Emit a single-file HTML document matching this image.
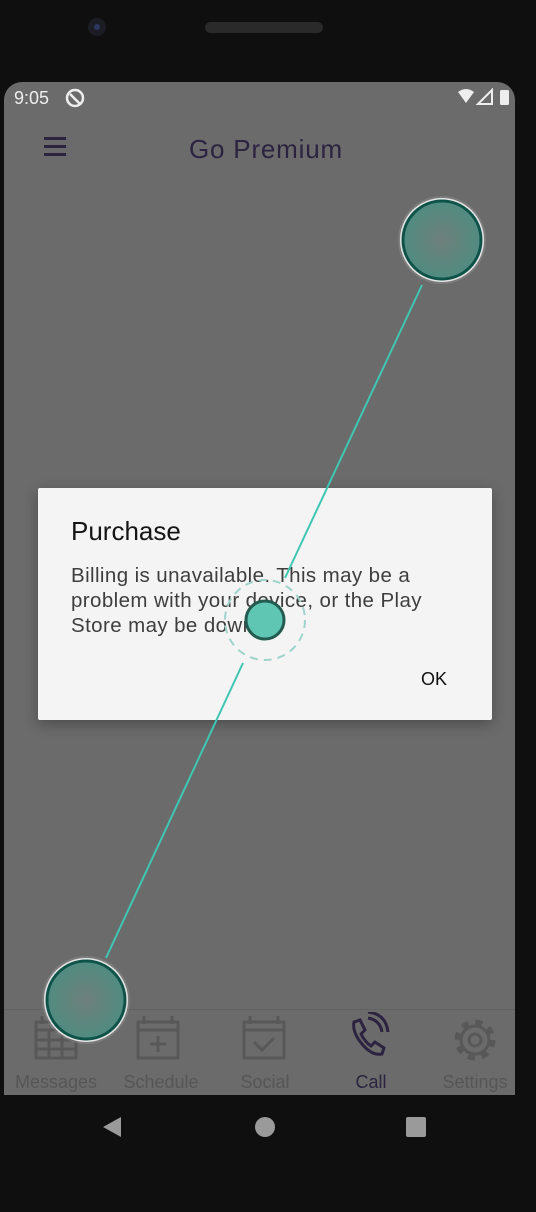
<!DOCTYPE html>
<html><head><meta charset="utf-8"><style>
body{margin:0;width:536px;height:1212px;background:#0f0f0f;position:relative;overflow:hidden;font-family:"Liberation Sans",sans-serif}
.screen{position:absolute;left:4px;top:82px;width:511px;height:1013px;background:#6b6b6b;border-radius:18px 18px 0 0;overflow:hidden}
.abs{position:absolute}
</style></head><body>
<div class="abs" style="left:88px;top:18px;width:18px;height:18px;border-radius:50%;background:#1c1c24"></div>
<div class="abs" style="left:94px;top:24px;width:6px;height:6px;border-radius:50%;background:#2c3560"></div>
<div class="abs" style="left:205px;top:22px;width:118px;height:11px;border-radius:6px;background:#2a2a2a"></div>
<div class="screen">
 <div class="abs" style="left:10px;top:6px;color:#eee;font-size:18px">9:05</div>
 <svg class="abs" style="left:60px;top:5px" width="22" height="22"><circle cx="11" cy="11" r="8" fill="none" stroke="#eee" stroke-width="2.5"/><path d="M6 7L16 17" stroke="#eee" stroke-width="2.5"/></svg>
 <svg class="abs" style="left:452px;top:6px" width="56" height="20"><path d="M2 4 Q10 -2 18 4 L10 15Z" fill="#eee"/><path d="M22 16 L36 2 L36 16Z" fill="none" stroke="#eee" stroke-width="2"/><rect x="44" y="2" width="9" height="15" rx="1.5" fill="#eee"/></svg>
 <div class="abs" style="left:40px;top:55px;width:22px;height:3px;background:#2b2340;box-shadow:0 8px 0 #2b2340,0 16px 0 #2b2340"></div>
 <div class="abs" style="left:185px;top:52px;color:#2b2340;font-size:26px;letter-spacing:0.8px">Go Premium</div>
 <div class="abs" style="left:0;top:927px;width:511px;height:1px;background:#626262"></div>
 <svg class="abs" style="left:0;top:930px" width="511" height="83">
  <g fill="none" stroke="#585858" stroke-width="3">
   <rect x="32" y="10" width="40" height="36"/><path d="M32 18H72M38 4V12M66 4V12M45 18V46M58 18V46M32 28H72M32 37H72"/>
   <rect x="134" y="10" width="40" height="36"/><path d="M134 18H174M140 4V12M168 4V12M154 24V40M146 32H162"/>
   <rect x="240" y="10" width="40" height="36"/><path d="M240 18H280M246 4V12M274 4V12M250 30L258 38L270 26"/>
   <circle cx="471" cy="28" r="17" stroke-width="7" stroke-dasharray="6.7 6.7"/>
   <circle cx="471" cy="28" r="14"/>
   <circle cx="471" cy="28" r="6"/>
  </g>
  <path d="M350 10l6-2 5 10-4 4q4 8 10 12l4-4 9 6-2 6q-10 2-20-10t-8-22z M364 6q12 2 14 14 M364 0q18 2 20 20" fill="none" stroke="#2b2340" stroke-width="3"/>
  <g font-size="18" fill="#565656" text-anchor="middle" font-family="Liberation Sans"><text x="52" y="76">Messages</text><text x="157" y="76">Schedule</text><text x="261" y="76">Social</text><text x="367" y="76" fill="#2b2340">Call</text><text x="471" y="76">Settings</text></g>
 </svg>
</div>
<div class="abs" style="left:38px;top:488px;width:454px;height:232px;background:#f4f4f4;border-radius:2px;box-shadow:0 4px 14px rgba(0,0,0,.3)"></div>
<div class="abs" style="left:71px;top:516px;font-size:26px;color:#151515">Purchase</div>
<div class="abs" style="left:71px;top:563px;font-size:20.5px;line-height:25px;color:#3e3e3e;letter-spacing:0.4px;white-space:nowrap">Billing is unavailable. This may be a<br>problem with your device, or the Play<br>Store may be down.</div>
<div class="abs" style="left:421px;top:669px;font-size:18px;color:#111">OK</div>
<svg class="abs" style="left:0;top:0" width="536" height="1212">
 <defs><radialGradient id="g"><stop offset="0" stop-color="#6f7f7b"/><stop offset="1" stop-color="#4f8c80"/></radialGradient></defs>
 <line x1="422" y1="285" x2="285" y2="578" stroke="#3ec7b2" stroke-width="2"/>
 <line x1="243" y1="663" x2="106" y2="958" stroke="#3ec7b2" stroke-width="2"/>
 <circle cx="265" cy="620" r="40" fill="none" stroke="#9fd4ca" stroke-width="2" stroke-dasharray="8 6"/>
 <circle cx="265" cy="620" r="19" fill="#5fc6b4" stroke="#245b50" stroke-width="3"/>
 <circle cx="442" cy="240" r="44" fill="rgba(255,255,255,.12)"/>
 <circle cx="442" cy="240" r="40" fill="url(#g)" stroke="#e6e6e6" stroke-width="4"/>
 <circle cx="442" cy="240" r="39" fill="none" stroke="#0f5248" stroke-width="3"/>
 <circle cx="86" cy="1000" r="44" fill="rgba(255,255,255,.12)"/>
 <circle cx="86" cy="1000" r="40" fill="url(#g)" stroke="#e6e6e6" stroke-width="4"/>
 <circle cx="86" cy="1000" r="39" fill="none" stroke="#0f5248" stroke-width="3"/>
 <path d="M103 1127 L121 1117 L121 1137Z" fill="#9a9a9a"/>
 <circle cx="265" cy="1127" r="10" fill="#9a9a9a"/>
 <rect x="406" y="1117" width="20" height="20" rx="2" fill="#9a9a9a"/>
</svg>
</body></html>
